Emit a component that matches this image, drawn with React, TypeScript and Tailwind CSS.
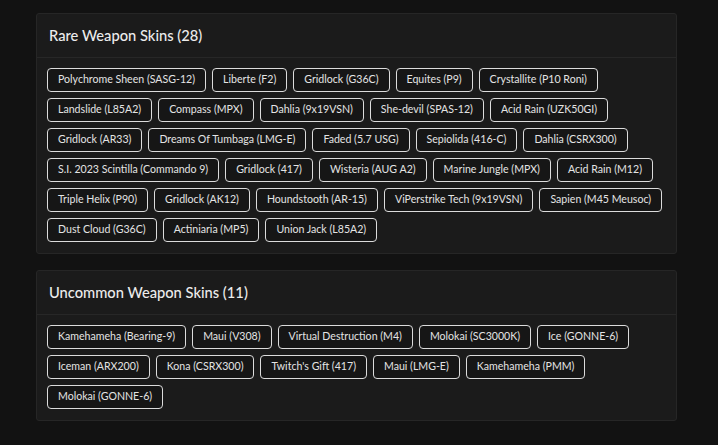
const rare = [
  'Polychrome Sheen (SASG-12)',
  'Liberte (F2)',
  'Gridlock (G36C)',
  'Equites (P9)',
  'Crystallite (P10 Roni)',
  'Landslide (L85A2)',
  'Compass (MPX)',
  'Dahlia (9x19VSN)',
  'She-devil (SPAS-12)',
  'Acid Rain (UZK50GI)',
  'Gridlock (AR33)',
  'Dreams Of Tumbaga (LMG-E)',
  'Faded (5.7 USG)',
  'Sepiolida (416-C)',
  'Dahlia (CSRX300)',
  'S.I. 2023 Scintilla (Commando 9)',
  'Gridlock (417)',
  'Wisteria (AUG A2)',
  'Marine Jungle (MPX)',
  'Acid Rain (M12)',
  'Triple Helix (P90)',
  'Gridlock (AK12)',
  'Houndstooth (AR-15)',
  'ViPerstrike Tech (9x19VSN)',
  'Sapien (M45 Meusoc)',
  'Dust Cloud (G36C)',
  'Actiniaria (MP5)',
  'Union Jack (L85A2)',
];

const uncommon = [
  'Kamehameha (Bearing-9)',
  'Maui (V308)',
  'Virtual Destruction (M4)',
  'Molokai (SC3000K)',
  'Ice (GONNE-6)',
  'Iceman (ARX200)',
  'Kona (CSRX300)',
  "Twitch's Gift (417)",
  'Maui (LMG-E)',
  'Kamehameha (PMM)',
  'Molokai (GONNE-6)',
];

function SkinCard({ title, skins }: { title: string; skins: string[] }) {
  return (
    <section className="bg-[#1b1b1b] border border-[#262626] rounded-[3px]">
      <header className="h-[44px] flex items-center px-[12px] border-b border-[#272727]">
        <h2 className="text-[14.7px] font-medium text-[#ececec]">
          {title} ({skins.length})
        </h2>
      </header>
      <div className="flex flex-wrap gap-[6px] px-[10px] pt-[10px] pb-[11px]">
        {skins.map((s) => (
          <span
            key={s}
            className="h-[24px] flex items-center px-[10px] border border-[#dcdcdc] rounded-[4px] bg-[#161616] text-[10.6px] text-[#e4e4e4] whitespace-nowrap"
          >
            {s}
          </span>
        ))}
      </div>
    </section>
  );
}

export default function App() {
  return (
    <div
      className="min-h-[445px] bg-[#121212] pt-[13px] pl-[36px]"
      style={{ fontFamily: 'Lato, "Noto Sans", sans-serif' }}
    >
      <div className="w-[641px] flex flex-col gap-[16px]">
        <SkinCard title="Rare Weapon Skins" skins={rare} />
        <SkinCard title="Uncommon Weapon Skins" skins={uncommon} />
      </div>
    </div>
  );
}
